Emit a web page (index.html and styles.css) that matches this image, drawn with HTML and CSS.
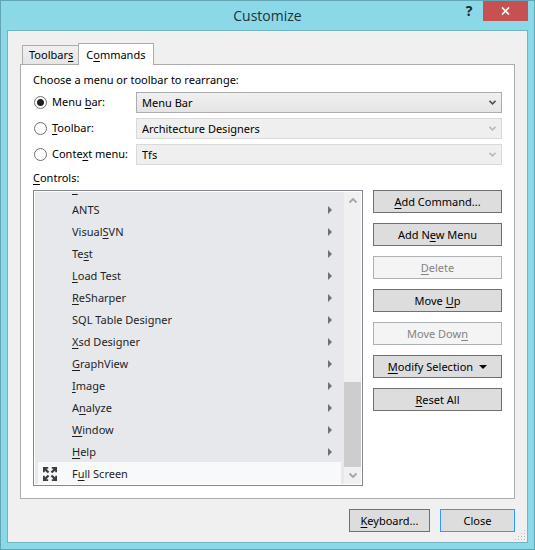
FILE: index.html
```html
<!DOCTYPE html>
<html lang="en">
<head>
<meta charset="utf-8">
<title>Customize</title>
<link rel="stylesheet" href="styles.css">
</head>
<body>
<div class="dialog">
  <header class="titlebar">
    <h1 class="title">Customize</h1>
    <div class="caption-buttons">
      <button class="help" type="button" aria-label="Help">?</button>
      <button class="close" type="button" aria-label="Close window">
        <svg width="9" height="8" viewBox="0 0 9 8"><path d="M1 0.5 8 7.5M8 0.5 1 7.5" stroke="#fff" stroke-width="1.7"/></svg>
      </button>
    </div>
  </header>
  <main class="client">
    <div class="tabs" role="tablist">
      <button class="tab" type="button" role="tab" aria-selected="false">Toolbar<u>s</u></button>
      <button class="tab tab-active" type="button" role="tab" aria-selected="true">C<u>o</u>mmands</button>
    </div>
    <section class="panel" role="tabpanel">
      <p class="intro">Choose a menu or toolbar to rearrange:</p>
      <div class="targets">
        <label class="choice"><input type="radio" name="target" checked><span>Menu <u>b</u>ar:</span></label>
        <div class="combo">
          <select aria-label="Menu bar"><option>Menu Bar</option></select>
          <svg class="chevron" width="7" height="5" viewBox="0 0 7 5"><path d="M0.5 0.8 3.5 3.8 6.5 0.8" fill="none" stroke="#505050" stroke-width="1.6"/></svg>
        </div>
        <label class="choice"><input type="radio" name="target"><span><u>T</u>oolbar:</span></label>
        <div class="combo">
          <select aria-label="Toolbar" disabled><option>Architecture Designers</option></select>
          <svg class="chevron" width="7" height="5" viewBox="0 0 7 5"><path d="M0.5 0.8 3.5 3.8 6.5 0.8" fill="none" stroke="#b9b9b9" stroke-width="1.6"/></svg>
        </div>
        <label class="choice"><input type="radio" name="target"><span>Conte<u>x</u>t menu:</span></label>
        <div class="combo">
          <select aria-label="Context menu" disabled><option>Tfs</option></select>
          <svg class="chevron" width="7" height="5" viewBox="0 0 7 5"><path d="M0.5 0.8 3.5 3.8 6.5 0.8" fill="none" stroke="#b9b9b9" stroke-width="1.6"/></svg>
        </div>
      </div>
      <p class="controls-label" id="controls-label"><u>C</u>ontrols:</p>
      <div class="editor">
        <div class="listbox">
          <ul class="items" aria-labelledby="controls-label">
            <li class="item submenu"><u>&nbsp;&nbsp;</u></li>
            <li class="item submenu">ANTS</li>
            <li class="item submenu">Visual<u>S</u>VN</li>
            <li class="item submenu">Te<u>s</u>t</li>
            <li class="item submenu"><u>L</u>oad Test</li>
            <li class="item submenu"><u>R</u>eSharper</li>
            <li class="item submenu">SQL Table Designer</li>
            <li class="item submenu"><u>X</u>sd Designer</li>
            <li class="item submenu"><u>G</u>raphView</li>
            <li class="item submenu"><u>I</u>mage</li>
            <li class="item submenu">A<u>n</u>alyze</li>
            <li class="item submenu"><u>W</u>indow</li>
            <li class="item submenu"><u>H</u>elp</li>
            <li class="item selected">
              <svg class="item-icon" width="14" height="14" viewBox="0 0 14 14" fill="#3c3c40">
                <path id="corner" d="M0 0H5.2V1.8H3.4L6.3 4.8 4.8 6.3 1.8 3.4V5.2H0Z"/>
                <use href="#corner" transform="rotate(90 7 7)"/>
                <use href="#corner" transform="rotate(180 7 7)"/>
                <use href="#corner" transform="rotate(270 7 7)"/>
              </svg>
              <span>F<u>u</u>ll Screen</span>
            </li>
          </ul>
          <div class="scrollbar">
            <svg width="17" height="17" viewBox="0 0 17 17"><path d="M5.5 10.5 9 7 12.5 10.5" fill="none" stroke="#a5a5a5" stroke-width="1.8"/></svg>
            <div class="track"><div class="thumb"></div></div>
            <svg width="17" height="17" viewBox="0 0 17 17"><path d="M5.5 6.5 9 10 12.5 6.5" fill="none" stroke="#a5a5a5" stroke-width="1.8"/></svg>
          </div>
        </div>
        <div class="actions">
          <button class="btn" type="button"><span><u>A</u>dd Command...</span></button>
          <button class="btn" type="button"><span>Add N<u>e</u>w Menu</span></button>
          <button class="btn" type="button" disabled><span><u>D</u>elete</span></button>
          <button class="btn" type="button"><span>Move <u>U</u>p</span></button>
          <button class="btn" type="button" disabled><span>Move Dow<u>n</u></span></button>
          <button class="btn" type="button"><span><u>M</u>odify Selection</span><svg width="8" height="4" viewBox="0 0 8 4"><path d="M0 0H8L4 4Z"/></svg></button>
          <button class="btn" type="button"><span><u>R</u>eset All</span></button>
        </div>
      </div>
    </section>
    <footer class="footer">
      <button class="btn keyboard" type="button"><span><u>K</u>eyboard...</span></button>
      <button class="btn default" type="button">Close</button>
    </footer>
    <svg class="grip" width="11" height="11" viewBox="0 0 11 11" fill="#b4b8c6">
      <path d="M9 0h1v1h-1zM9 3h1v1h-1zM9 6h1v1h-1zM9 9h1v1h-1zM6 3h1v1h-1zM6 6h1v1h-1zM6 9h1v1h-1zM3 6h1v1h-1zM3 9h1v1h-1zM0 9h1v1h-1z"/>
    </svg>
  </main>
</div>
</body>
</html>
```
FILE: styles.css
```css
* {
  box-sizing: border-box;
}

body {
  margin: 0;
  font: 11px/16px "Noto Sans", "Open Sans", sans-serif;
  color: #000;
}

button,
select,
input {
  margin: 0;
  font: inherit;
  color: inherit;
}

p,
h1,
ul {
  margin: 0;
  padding: 0;
}

u {
  text-underline-offset: 2px;
  text-decoration-thickness: 1px;
  text-decoration-skip-ink: none;
}

.dialog {
  display: flex;
  flex-direction: column;
  height: 100vh;
  min-height: 440px;
  padding: 0 6px 6px;
  border: 1px solid #62a6b5;
  background: #8ad8e8;
}

.titlebar {
  display: grid;
  grid-template-columns: 1fr auto 1fr;
  height: 29px;
}

.title {
  grid-column: 2;
  font-family: "Open Sans", "Noto Sans", sans-serif;
  font-size: 14px;
  font-weight: 400;
  line-height: 29px;
  color: #1e3338;
}

.caption-buttons {
  display: flex;
  justify-content: flex-end;
  align-items: flex-start;
}

.help,
.close {
  display: flex;
  justify-content: center;
  align-items: center;
  height: 20px;
  padding: 0;
  border: 0;
}

.help {
  width: 28px;
  background: none;
  font-size: 14px;
  font-weight: 700;
  color: #1b2a2e;
}

.close {
  width: 45px;
  background: #c75050;
}

.client {
  position: relative;
  display: flex;
  flex: 1;
  flex-direction: column;
  min-height: 0;
  padding: 12px 12px 10px;
  border: 1px solid #72b4c1;
  background: #f0f0f0;
}

.tabs {
  display: flex;
  align-items: flex-end;
  height: 22px;
  margin-bottom: -1px;
  padding-left: 2px;
}

.tab {
  height: 20px;
  padding: 0 5px 0 6px;
  border: 1px solid #acacac;
  border-right: 0;
  background: linear-gradient(#f0f0f0, #e5e5e5);
  line-height: 18px;
}

.tab-active {
  z-index: 1;
  height: 22px;
  padding: 0 8px 0 7px;
  border-right: 1px solid #acacac;
  border-bottom: 0;
  background: #fff;
  line-height: 20px;
}

.panel {
  display: flex;
  flex: 1;
  flex-direction: column;
  min-height: 0;
  padding: 7px 12px 12px;
  border: 1px solid #acacac;
  background: #fff;
}

.intro {
  margin-bottom: 4px;
}

.targets {
  display: grid;
  grid-template-columns: 103px 1fr;
  row-gap: 5px;
}

.choice {
  display: flex;
  align-items: center;
  gap: 5px;
  height: 20px;
  padding-left: 1px;
  white-space: nowrap;
}

.choice input {
  appearance: none;
  width: 13px;
  height: 13px;
  border: 1px solid #707070;
  border-radius: 50%;
  background: #fff;
}

.choice input:checked {
  background: radial-gradient(circle, #212121 3px, #fff 4px);
}

.combo {
  display: grid;
  align-items: center;
}

.combo select {
  grid-area: 1 / 1;
  appearance: none;
  width: 100%;
  height: 21px;
  padding: 0 20px 0 5px;
  border: 1px solid #acacac;
  border-radius: 0;
  background: linear-gradient(#f0f0f0, #e5e5e5);
}

.combo select:disabled {
  border-color: #d9d9d9;
  background: #efefef;
  color: #000;
  opacity: 1;
}

.chevron {
  grid-area: 1 / 1;
  justify-self: end;
  margin-right: 6px;
  pointer-events: none;
}

.controls-label {
  margin: 5px 0 4px;
}

.editor {
  display: grid;
  grid-template-columns: 1fr 129px;
  gap: 10px;
  flex: 1;
  min-height: 0;
}

.listbox {
  display: flex;
  min-height: 0;
  padding: 1px;
  border: 1px solid #828790;
  background: #fff;
}

.items {
  display: flex;
  flex: 1;
  flex-direction: column;
  justify-content: flex-end;
  overflow: hidden;
  padding: 0 3px;
  background: #e7e8ec;
  list-style: none;
}

.item {
  display: flex;
  flex: none;
  align-items: center;
  height: 22px;
  padding: 2px 9px 0 34px;
  color: #1e1e1e;
}

.submenu::after {
  content: "";
  margin-left: auto;
  border: 4px solid transparent;
  border-right: 0;
  border-left-color: #717171;
}

.selected {
  gap: 15px;
  padding-left: 5px;
  background: #f8f9fb;
}

.scrollbar {
  display: flex;
  flex-direction: column;
  width: 17px;
  background: #f0f0f0;
}

.scrollbar svg {
  flex: none;
}

.track {
  display: flex;
  flex: 1;
  flex-direction: column;
  justify-content: flex-end;
}

.thumb {
  height: 33%;
  background: #cdcdcd;
}

.actions {
  display: flex;
  flex-direction: column;
  gap: 10px;
}

.btn {
  display: flex;
  justify-content: center;
  align-items: center;
  gap: 6px;
  height: 23px;
  padding: 0 10px;
  border: 1px solid #707070;
  background: #ddd;
}

.btn:disabled {
  border-color: #adb2b5;
  background: #f4f4f4;
  color: #838383;
}

.footer {
  display: flex;
  justify-content: flex-end;
  gap: 10px;
  padding-top: 10px;
}

.keyboard {
  width: 81px;
}

.default {
  width: 75px;
  border-color: #3399ff;
}

.grip {
  position: absolute;
  right: 1px;
  bottom: 1px;
}
```
